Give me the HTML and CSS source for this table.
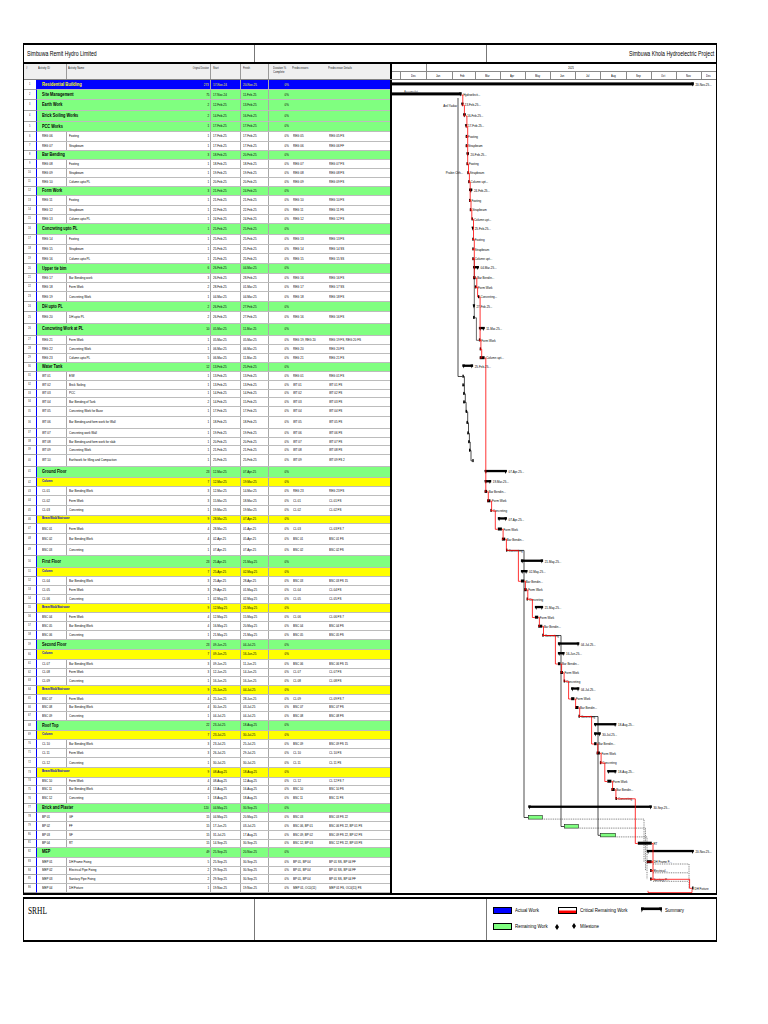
FILE: index.html
```html
<!DOCTYPE html>
<html lang="en">
<head>
<meta charset="utf-8">
<title>Simbuwa Remit Hydro Limited - Schedule</title>
<link rel="stylesheet" href="styles.css">
</head>
<body>
<div class="page">
  <div class="frame">
    <div class="title-row">
      <div class="tl"><span class="t title-text">Simbuwa Remit Hydro Limited</span></div>
      <div class="tm"></div>
      <div class="tr r"><span class="t title-text">Simbuwa Khola Hydroelectric Project</span></div>
    </div>
    <div class="head">
      <div class="thead">
        <div class="hnum hc"><span class="t">#</span></div>
        <div class="hband">
          <div class="hc"><span class="t">Activity ID</span></div>
          <div class="hc hname"><span class="t">Activity Name</span></div>
          <div class="hc hdur r"><span class="t">Original Duration</span></div>
          <div class="hc hdate"><span class="t">Start</span></div>
          <div class="hc hdate"><span class="t">Finish</span></div>
          <div class="hc hpct"><span class="t">Duration %<br>Complete</span></div>
          <div class="hc"><span class="t">Predecessors</span></div>
          <div class="hc"><span class="t">Predecessor Details</span></div>
        </div>
      </div>
      <div class="chead">
        <div class="years"><div class="y24"></div><div class="y25"><span class="t">2025</span></div></div>
        <div class="months" id="months"></div>
      </div>
    </div>
    <div class="body">
      <div class="rows" id="rows"></div>
      <div class="chart"><svg id="chart" width="324" height="813" viewBox="392 80 324 813" xmlns="http://www.w3.org/2000/svg"></svg></div>
    </div>
  </div>
  <div class="legend">
    <div class="lg-l"><span class="t">SRHL</span></div>
    <div class="lg-m"></div>
    <div class="lg-r">
      <div class="lg-grid">
        <div class="sw blue"></div>
        <div class="lt"><span class="t">Actual Work</span></div>
        <div class="sw crit"></div>
        <div class="lt"><span class="t">Critical Remaining Work</span></div>
        <div class="swsum"><svg width="21" height="6" viewBox="0 0 21 6"><rect x="0" y="0.5" width="21" height="2.6" fill="#000"/><polygon points="0,0.5 3,0.5 0.6,5.5" fill="#000"/><polygon points="18,0.5 21,0.5 20.4,5.5" fill="#000"/></svg></div>
        <div class="lt"><span class="t">Summary</span></div>
        <div class="sw green"></div>
        <div class="lt lt2"><span class="t">Remaining Work</span><svg class="dia dia1" width="4" height="6" viewBox="0 0 4 6"><polygon points="2,0 4,3 2,6 0,3" fill="#000"/></svg></div>
        <div class="ldia"><svg class="dia" width="4" height="6" viewBox="0 0 4 6"><polygon points="2,0 4,3 2,6 0,3" fill="#000"/></svg></div>
        <div class="lt"><span class="t">Milestone</span></div>
      </div>
    </div>
  </div>
</div>
<script src="script.js"></script>
</body>
</html>
```

FILE: styles.css
```css
* { box-sizing: border-box; margin: 0; padding: 0; }
html, body { background: #fff; }
body {
  margin: 0;
  font-family: "Liberation Sans Narrow", "Liberation Sans", Arial, sans-serif;
  color: #000;
}
.page { padding: 43px 0 0 23px; }

.t {
  display: inline-block;
  white-space: nowrap;
  transform: scaleX(.74);
  transform-origin: 0 50%;
}
.r .t { transform-origin: 100% 50%; }

.frame {
  width: 694px;
  border-left: 1px solid #000;
  border-right: 1px solid #000;
  border-top: 2px solid #000;
  border-bottom: 2px solid #000;
}

/* title */
.title-row {
  display: grid;
  grid-template-columns: 230px 233px 229px;
  height: 19px;
  border-bottom: 2px solid #000;
}
.title-row > div { display: flex; align-items: center; }
.tl { padding-left: 3px; }
.tm { border-left: 1px solid #777; border-right: 1px solid #777; }
.tr { justify-content: flex-end; padding-right: 2px; }
.title-text { font-family: "Liberation Sans", Arial, sans-serif; font-size: 7px; }

/* column header */
.head { display: flex; height: 16px; border-bottom: 1px solid #808080; }
.thead { width: 366px; display: flex; background: #efefef; }
.hnum { width: 12px; padding-left: 2px !important; }
.hband {
  width: 354px;
  padding-left: 1px;
  display: grid;
  grid-template-columns: 29px 122px 23px 30px 28px 22px 36px 63px;
}
.hc {
  font-size: 3.6px;
  line-height: 1.2;
  padding: 2px 0 0 1px;
  color: #222;
  white-space: nowrap;
}
.hname { border-left: 1px solid #9a9a9a; }
.hdur {
  display: flex;
  justify-content: flex-end;
  align-items: flex-start;
  padding-right: 1px;
  border-right: 1px solid #9a9a9a;
}
.hdur .t { transform: scaleX(.6); }
.hdate { border-right: 1px solid #9a9a9a; padding-left: 2px; }
.hpct { padding-left: 4px; }

.chead {
  width: 326px;
  border-left: 2px solid #000;
  display: flex;
  flex-direction: column;
}
.years { display: flex; height: 8px; border-bottom: 1px solid #8a8a8a; }
.y24 { width: 35px; border-right: 1px solid #8a8a8a; }
.y25 { flex: 1; display: flex; justify-content: center; align-items: center; font-size: 3.6px; }
.months { display: flex; flex: 1; }
.mo {
  flex: none;
  border-right: 1px solid #8a8a8a;
  display: flex;
  justify-content: center;
  align-items: center;
  font-size: 3.6px;
}
.mo:last-child { border-right: none; }

/* body */
.body { display: flex; height: 813px; }
.rows { width: 366px; display: flex; flex-direction: column; }
.row { display: flex; flex: none; line-height: 1; }
.num {
  width: 12px;
  display: flex;
  align-items: center;
  justify-content: center;
  font-size: 3.4px;
  color: #333;
  border-bottom: 1px solid #a0a0a0;
}
.band {
  width: 354px;
  border-left: 1px solid #0000ff;
  border-bottom: 1px solid #bcbcbc;
  display: grid;
  grid-template-columns: 29px 122px 23px 30px 28px 22px 36px 63px;
  font-size: 4px;
  background: #fff;
}
.c { display: flex; align-items: center; min-width: 0; white-space: nowrap; }
.cid { padding-left: 5px; }
.cname { border-left: 1px solid #a8a8a8; padding-left: 1.5px; }
.cdur { justify-content: flex-end; padding-right: 1px; border-right: 1px solid #a8a8a8; }
.cst, .cfi { padding-left: 2px; border-right: 1px solid #a8a8a8; }
.cpct { justify-content: flex-end; padding-right: 2px; }
.cpred, .csucc { padding-left: 2px; }
.gname { grid-column: 1 / 3; padding-left: 5px; font-weight: bold; }

.L0 .band { background: #0000ff; color: #ffff00; }
.L0 .gname { font-size: 5.6px; }
.L1 .band { background: #80ff80; }
.L1 .gname { font-size: 5.2px; }
.L2 .band { background: #ffff00; }
.L2 .gname { font-size: 3.8px; color: #0000cc; }

.chart { width: 326px; border-left: 2px solid #000; background: #fff; }
.chart svg { display: block; }
.lb { font-family: "Liberation Sans Narrow", "Liberation Sans", sans-serif; font-size: 4px; fill: #000; }
.lb.g { fill: #444; }

/* legend */
.legend {
  width: 694px;
  height: 45px;
  margin-top: 2px;
  border-left: 1px solid #000;
  border-right: 1px solid #000;
  border-top: 2px solid #000;
  border-bottom: 2px solid #000;
  display: grid;
  grid-template-columns: 230px 233px 229px;
}
.lg-l { padding: 6px 0 0 4px; font-family: "Liberation Serif", "Times New Roman", serif; font-size: 10px; }
.lg-m { border-left: 1px solid #777; border-right: 1px solid #777; }
.lg-r { padding: 7px 0 0 6px; }
.lg-grid {
  display: grid;
  grid-template-columns: 19px 46px 19px 64px 21px auto;
  grid-auto-rows: 8px;
  row-gap: 8px;
  align-items: center;
  font-family: "Liberation Sans", Arial, sans-serif;
  font-size: 6px;
}
.sw { height: 7px; border: 1px solid #000; }
.sw.blue { background: #0000ff; }
.sw.green { background: #80ff80; }
.sw.crit { background: #fff; box-shadow: inset 0 -2.5px 0 #ff0000; }
.swsum { display: flex; align-items: center; }
.swsum svg { display: block; }
.lt { padding-left: 3px; display: flex; align-items: center; white-space: nowrap; }
.lt2 { position: relative; }
.dia { display: block; flex: none; }
.dia1 { position: absolute; right: -1px; top: 1px; }
.ldia { display: flex; justify-content: flex-end; padding-right: 1px; }
```

FILE: script.js
```js
(function () {
  var MON = {Jan:0,Feb:1,Mar:2,Apr:3,May:4,Jun:5,Jul:6,Aug:7,Sep:8,Oct:9,Nov:10,Dec:11};
  var D0 = Date.UTC(2025, 0, 1), K = 275 / 334;
  function day(s) { var p = s.split('-'); return Math.round((Date.UTC(2000 + (+p[2]), MON[p[1]], +p[0]) - D0) / 864e5); }
  function X(s, e) { return 427 + (day(s) + (e ? 1 : 0)) * K; }

  var R = [
    ['L0','','Residential Building','273','17-Nov-24','20-Nov-25'],
    ['L1','','Site Management','75','17-Nov-24','11-Feb-25'],
    ['L1','','Earth Work','2','12-Feb-25','13-Feb-25'],
    ['L1','','Brick Soiling Works','2','14-Feb-25','16-Feb-25'],
    ['L1','','PCC Works','1','17-Feb-25','17-Feb-25'],
    ['T','REG 06','Footing','1','17-Feb-25','17-Feb-25','REG 05','REG 05 FS'],
    ['T','REG 07','Strapbeam','1','17-Feb-25','17-Feb-25','REG 06','REG 06 FF'],
    ['L1','','Bar Bending','3','18-Feb-25','20-Feb-25'],
    ['T','REG 08','Footing','1','18-Feb-25','18-Feb-25','REG 07','REG 07 FS'],
    ['T','REG 09','Strapbeam','1','19-Feb-25','19-Feb-25','REG 08','REG 08 FS'],
    ['T','REG 10','Column upto PL','1','20-Feb-25','20-Feb-25','REG 09','REG 09 FS'],
    ['L1','','Form Work','3','21-Feb-25','24-Feb-25'],
    ['T','REG 11','Footing','1','21-Feb-25','21-Feb-25','REG 10','REG 10 FS'],
    ['T','REG 12','Strapbeam','1','22-Feb-25','22-Feb-25','REG 11','REG 11 FS'],
    ['T','REG 13','Column upto PL','1','24-Feb-25','24-Feb-25','REG 12','REG 12 FS'],
    ['L1','','Concreting upto PL','1','25-Feb-25','25-Feb-25'],
    ['T','REG 14','Footing','1','25-Feb-25','25-Feb-25','REG 13','REG 13 FS'],
    ['T','REG 15','Strapbeam','1','25-Feb-25','25-Feb-25','REG 14','REG 14 SS'],
    ['T','REG 16','Column upto PL','1','25-Feb-25','25-Feb-25','REG 15','REG 15 SS'],
    ['L1','','Upper tie bim','6','26-Feb-25','04-Mar-25'],
    ['T','REG 17','Bar Bending work','3','26-Feb-25','28-Feb-25','REG 16','REG 16 FS'],
    ['T','REG 18','Form Work','2','28-Feb-25','01-Mar-25','REG 17','REG 17 SS'],
    ['T','REG 19','Concreting Work','1','04-Mar-25','04-Mar-25','REG 18','REG 18 FS'],
    ['L1','','DH upto PL','2','26-Feb-25','27-Feb-25'],
    ['T','REG 20','DH upto PL','2','26-Feb-25','27-Feb-25','REG 16','REG 16 FS'],
    ['L1','','Concreting Work at PL','10','05-Mar-25','11-Mar-25'],
    ['T','REG 21','Form Work','1','05-Mar-25','05-Mar-25','REG 19, REG 20','REG 19 FS, REG 20 FS'],
    ['T','REG 22','Concreting Work','1','06-Mar-25','06-Mar-25','REG 20','REG 20 FS'],
    ['T','REG 23','Column upto PL','5','06-Mar-25','11-Mar-25','REG 21','REG 21 FS'],
    ['L1','','Water Tank','12','13-Feb-25','25-Feb-25'],
    ['T','WT 01','E/W','1','13-Feb-25','13-Feb-25','REG 01','REG 01 FS'],
    ['T','WT 02','Brick Soiling','1','13-Feb-25','13-Feb-25','WT 01','WT 01 FS'],
    ['T','WT 03','PCC','1','14-Feb-25','14-Feb-25','WT 02','WT 02 FS'],
    ['T','WT 04','Bar Bending of Tank','2','14-Feb-25','15-Feb-25','WT 03','WT 03 FS'],
    ['T','WT 05','Concreting Work for Base','1','17-Feb-25','17-Feb-25','WT 04','WT 04 FS'],
    ['T','WT 06','Bar Bending and form work for Wall','1','18-Feb-25','18-Feb-25','WT 05','WT 05 FS'],
    ['T','WT 07','Concreting work Wall','1','19-Feb-25','19-Feb-25','WT 06','WT 06 FS'],
    ['T','WT 08','Bar Bending and form work for slab','1','20-Feb-25','20-Feb-25','WT 07','WT 07 FS'],
    ['T','WT 09','Concreting Work','1','21-Feb-25','21-Feb-25','WT 08','WT 08 FS'],
    ['T','WT 10','Earthwork for filling and Compaction','1','25-Feb-25','25-Feb-25','WT 09','WT 09 FS 2'],
    ['L1','','Ground Floor','23','12-Mar-25','07-Apr-25'],
    ['L2','','Column','7','12-Mar-25','19-Mar-25'],
    ['T','CL 01','Bar Bending Work','3','12-Mar-25','14-Mar-25','REG 23','REG 23 FS'],
    ['T','CL 02','Form Work','3','15-Mar-25','18-Mar-25','CL 01','CL 01 FS'],
    ['T','CL 03','Concreting','1','19-Mar-25','19-Mar-25','CL 02','CL 02 FS'],
    ['L2','','Beam/Slab/Staircase','9','28-Mar-25','07-Apr-25'],
    ['T','BSC 01','Form Work','4','28-Mar-25','01-Apr-25','CL 03','CL 03 FS 7'],
    ['T','BSC 02','Bar Bending Work','4','02-Apr-25','05-Apr-25','BSC 01','BSC 01 FS'],
    ['T','BSC 03','Concreting','1','07-Apr-25','07-Apr-25','BSC 02','BSC 02 FS'],
    ['L1','','First Floor','23','25-Apr-25','21-May-25'],
    ['L2','','Column','7','25-Apr-25','02-May-25'],
    ['T','CL 04','Bar Bending Work','3','25-Apr-25','28-Apr-25','BSC 03','BSC 03 FS 15'],
    ['T','CL 05','Form Work','3','29-Apr-25','01-May-25','CL 04','CL 04 FS'],
    ['T','CL 06','Concreting','1','02-May-25','02-May-25','CL 05','CL 05 FS'],
    ['L2','','Beam/Slab/Staircase','9','12-May-25','21-May-25'],
    ['T','BSC 04','Form Work','4','12-May-25','15-May-25','CL 06','CL 06 FS 7'],
    ['T','BSC 05','Bar Bending Work','4','16-May-25','20-May-25','BSC 04','BSC 04 FS'],
    ['T','BSC 06','Concreting','1','21-May-25','21-May-25','BSC 05','BSC 05 FS'],
    ['L1','','Second Floor','23','09-Jun-25','04-Jul-25'],
    ['L2','','Column','7','09-Jun-25','16-Jun-25'],
    ['T','CL 07','Bar Bending Work','3','09-Jun-25','11-Jun-25','BSC 06','BSC 06 FS 15'],
    ['T','CL 08','Form Work','3','12-Jun-25','14-Jun-25','CL 07','CL 07 FS'],
    ['T','CL 09','Concreting','1','16-Jun-25','16-Jun-25','CL 08','CL 08 FS'],
    ['L2','','Beam/Slab/Staircase','9','25-Jun-25','04-Jul-25'],
    ['T','BSC 07','Form Work','4','25-Jun-25','28-Jun-25','CL 09','CL 09 FS 7'],
    ['T','BSC 08','Bar Bending Work','4','30-Jun-25','03-Jul-25','BSC 07','BSC 07 FS'],
    ['T','BSC 09','Concreting','1','04-Jul-25','04-Jul-25','BSC 08','BSC 08 FS'],
    ['L1','','Roof Top','22','23-Jul-25','18-Aug-25'],
    ['L2','','Column','7','23-Jul-25','30-Jul-25'],
    ['T','CL 10','Bar Bending Work','3','23-Jul-25','25-Jul-25','BSC 09','BSC 09 FS 15'],
    ['T','CL 11','Form Work','3','26-Jul-25','29-Jul-25','CL 10','CL 10 FS'],
    ['T','CL 12','Concreting','1','30-Jul-25','30-Jul-25','CL 11','CL 11 FS'],
    ['L2','','Beam/Slab/Staircase','9','08-Aug-25','18-Aug-25'],
    ['T','BSC 10','Form Work','4','08-Aug-25','12-Aug-25','CL 12','CL 12 FS 7'],
    ['T','BSC 11','Bar Bending Work','4','13-Aug-25','16-Aug-25','BSC 10','BSC 10 FS'],
    ['T','BSC 12','Concreting','1','18-Aug-25','18-Aug-25','BSC 11','BSC 11 FS'],
    ['L1','','Brick and Plaster','120','04-May-25','30-Sep-25'],
    ['T','BP 01','GF','15','04-May-25','20-May-25','BSC 03','BSC 03 FS 22'],
    ['T','BP 02','FF','15','17-Jun-25','03-Jul-25','BSC 06, BP 01','BSC 06 FS 22, BP 01 FS'],
    ['T','BP 03','SF','15','31-Jul-25','17-Aug-25','BSC 09, BP 02','BSC 09 FS 22, BP 02 FS'],
    ['T','BP 04','RT','15','14-Sep-25','30-Sep-25','BSC 12, BP 03','BSC 12 FS 22, BP 03 FS'],
    ['L1','','MEP','49','25-Sep-25','20-Nov-25'],
    ['T','MEP 01','DH Frame Fixing','5','25-Sep-25','30-Sep-25','BP 01, BP 04','BP 01 SS, BP 04 FF'],
    ['T','MEP 02','Electrical Pipe Fixing','2','29-Sep-25','30-Sep-25','BP 01, BP 04','BP 01 SS, BP 04 FF'],
    ['T','MEP 03','Sanitary Pipe Fixing','2','29-Sep-25','30-Sep-25','BP 01, BP 04','BP 01 SS, BP 04 FF'],
    ['T','MEP 04','DH Fixture','1','19-Nov-25','19-Nov-25','MEP 01, OC0(11)','MEP 01 FS, OC0(11) FS']
  ];

  var C = [85,95,105,116,127,137,146,155,164,173,182,191,201,210,219,229,240,249,259,269,
           278,287,297,307,317,330,341,349,358,367,377,385,394,402,411,423,434,442,450,460,
           473.5,483,491.5,501,511,520,528.5,540,549,563.5,573,581,590,599,609,617,627,635,645,655,
           664,673,681,690,699,708,716,726,735,744,753,763,773,782,789,799,808,818,826,836,
           843,852,863,870,880,887];

  var B = [80];
  for (var i = 0; i < C.length - 1; i++) B.push((C[i] + C[i + 1]) / 2);
  B.push(893);
  function yc(n) { return (B[n - 1] + B[n]) / 2; }
  function f(n) { return n.toFixed(1); }
  function sp(t) { return '<span class="t">' + t + '</span>'; }

  /* ---------- table rows ---------- */
  var html = '';
  R.forEach(function (r, i) {
    var t = r[0], h = (B[i + 1] - B[i]).toFixed(2);
    html += '<div class="row ' + t + '" style="height:' + h + 'px"><div class="num">' + sp(i + 1) + '</div><div class="band">';
    if (t === 'T') {
      html += '<div class="c cid">' + sp(r[1]) + '</div><div class="c cname">' + sp(r[2]) + '</div>';
    } else {
      html += '<div class="c gname">' + sp(r[2]) + '</div>';
    }
    html += '<div class="c cdur r">' + sp(r[3]) + '</div>' +
            '<div class="c cst">' + sp(r[4]) + '</div>' +
            '<div class="c cfi">' + sp(r[5]) + '</div>' +
            '<div class="c cpct r">' + sp('0%') + '</div>' +
            '<div class="c cpred">' + sp(r[6] || '') + '</div>' +
            '<div class="c csucc">' + sp(r[7] || '') + '</div></div></div>';
  });
  document.getElementById('rows').innerHTML = html;

  /* ---------- timescale ---------- */
  var md = [-31,0,31,59,90,120,151,181,212,243,273,304,334];
  var names = ['Dec','Jan','Feb','Mar','Apr','May','Jun','Jul','Aug','Sep','Oct','Nov'];
  var mx = md.map(function (d) { return 427 + d * K; });
  var mh = '<div class="mo" style="width:' + (mx[0] - 392).toFixed(2) + 'px"></div>';
  for (var m = 0; m < names.length; m++) {
    mh += '<div class="mo" style="width:' + (mx[m + 1] - mx[m]).toFixed(2) + 'px">' + sp(names[m]) + '</div>';
  }
  mh += '<div class="mo" style="width:' + (716 - mx[12]).toFixed(2) + 'px">' + sp('Dec') + '</div>';
  document.getElementById('months').innerHTML = mh;

  /* ---------- chart ---------- */
  var s = '';
  function text(x, y, t, end, cls) {
    return '<text class="lb' + (cls ? ' ' + cls : '') + '" transform="translate(' + f(x) + ' ' + f(y) + ') scale(.74 1)"' + (end ? ' text-anchor="end"' : '') + '>' + t + '</text>';
  }
  function cap(x, yt) {
    return '<polygon points="' + f(x - 1.3) + ',' + f(yt) + ' ' + f(x + 1.3) + ',' + f(yt) + ' ' + f(x) + ',' + f(yt + 4) + '" fill="#000"/>';
  }
  function link(a, b, col, w, dash) {
    var ra = R[a - 1], rb = R[b - 1];
    var xf = X(ra[5], 1), xs = X(rb[4]);
    var xv = Math.max(xf + 1.2, xs - 2.5);
    return '<path d="M' + f(xf) + ' ' + f(yc(a)) + 'H' + f(xv) + 'V' + f(yc(b)) + 'H' + f(xs) + '" fill="none" stroke="' + col + '" stroke-width="' + w + '"' + (dash ? ' stroke-dasharray="' + dash + '"' : '') + '/>';
  }
  function path(d, col, w, dash) {
    return '<path d="' + d + '" fill="none" stroke="' + col + '" stroke-width="' + w + '"' + (dash ? ' stroke-dasharray="' + dash + '"' : '') + '/>';
  }

  /* black relationship lines (drawn first) */
  s += path('M458 ' + f(yc(2) + 3) + 'V' + f(yc(31)) + 'H' + f(X('13-Feb-25')), '#000', 0.7);
  for (var w = 31; w < 40; w++) s += link(w, w + 1, '#000', 0.7);
  s += link(19, 25, '#000', 0.6);
  s += link(25, 27, '#000', 0.6);
  s += path('M' + f(X('07-Apr-25', 1)) + ' ' + f(yc(49)) + 'H524V' + f(yc(78)) + 'H' + f(X('04-May-25')), '#000', 0.7);
  s += path('M' + f(X('21-May-25', 1)) + ' ' + f(yc(58)) + 'H561V' + f(yc(79)) + 'H' + f(X('17-Jun-25')), '#000', 0.7);
  s += path('M' + f(X('04-Jul-25', 1)) + ' ' + f(yc(67)) + 'H598V' + f(yc(80)) + 'H' + f(X('31-Jul-25')), '#000', 0.7);
  s += path('M' + f(X('20-May-25', 1)) + ' ' + f(yc(78) + 1.6) + 'H644V' + f(yc(83)), '#000', 0.5, '1 .8');
  s += path('M' + f(X('03-Jul-25', 1)) + ' ' + f(yc(79) + 1.6) + 'H645.5V' + f(yc(84)), '#000', 0.5, '1 .8');
  s += path('M' + f(X('17-Aug-25', 1)) + ' ' + f(yc(80) + 1.6) + 'H647V' + f(yc(85)), '#000', 0.5, '1 .8');
  s += path('M653 ' + f(yc(83) + 2) + 'H689V' + f(yc(86)), '#000', 0.5, '1 .8');
  s += path('M653 ' + f(yc(84) + 2) + 'H688', '#000', 0.5, '1 .8');
  s += path('M653 ' + f(yc(85) + 2) + 'H688', '#000', 0.5, '1 .8');

  /* bars and labels */
  var noLabel = {25:1, 28:1, 78:1, 79:1, 80:1};
  R.forEach(function (r, i) {
    var n = i + 1, y = yc(n), t = r[0];
    var x0 = X(r[4]), x1 = X(r[5], 1);
    if (t !== 'T') {
      var clipped = x0 < 392;
      x0 = Math.max(x0, 392);
      var yt = y - 2.6, h = (n <= 2) ? 3 : 2.3;
      s += '<rect x="' + f(x0) + '" y="' + f(yt) + '" width="' + f(Math.max(x1 - x0, 1.2)) + '" height="' + h + '" fill="#000"/>';
      if (x1 - x0 < 3) {
        s += cap((x0 + x1) / 2, yt);
      } else {
        if (!clipped) s += cap(x0 + 1.3, yt);
        s += cap(x1 - 1.3, yt);
      }
      var lab = (n === 2) ? 'Hydroelecti...' : r[5] + '...';
      s += text(x1 + 1.6, y + 0.6, lab);
    } else {
      var bp = (n >= 78 && n <= 80);
      s += '<rect x="' + f(x0) + '" y="' + f(y - (bp ? 2 : 1.8)) + '" width="' + f(Math.max(x1 - x0, 1.4)) + '" height="' + (bp ? 3.6 : 3) + '" fill="' + (bp ? '#80ff80' : '#000') + '"' + (bp ? ' stroke="#000" stroke-width=".5"' : '') + '/>';
      var isWT = (n >= 31 && n <= 40);
      if (!isWT && !noLabel[n]) {
        var nm = r[2].length > 10 ? r[2].slice(0, 10) + '...' : r[2];
        s += text(x1 + 1.6, y + 1.3, nm);
      }
    }
  });

  /* critical path (red) */
  var crit = [2,3,4,5,6,7,9,10,11,13,14,15,17,18,19,21,22,23,27,28,29,43,44,45,47,48,49,52,53,54,56,57,58,61,62,63,65,66,67,70,71,72,74,75,76,81,83,84,85,86];
  for (var k = 0; k < crit.length - 1; k++) s += link(crit[k], crit[k + 1], '#ff0000', 0.8);
  s += path('M648 ' + f(yc(86) + 2.5) + 'V892.5H692V' + f(yc(86) + 1), '#ff0000', 0.7);

  /* resource labels */
  s += text(404, yc(2) - 2.2, 'Accumulat...', false, 'g');
  s += text(457, yc(3) + 1.3, 'Anil Yadav', true);
  s += text(463, yc(10) + 1.3, 'Prabin Chh...', true);

  document.getElementById('chart').innerHTML = s;
})();
```
